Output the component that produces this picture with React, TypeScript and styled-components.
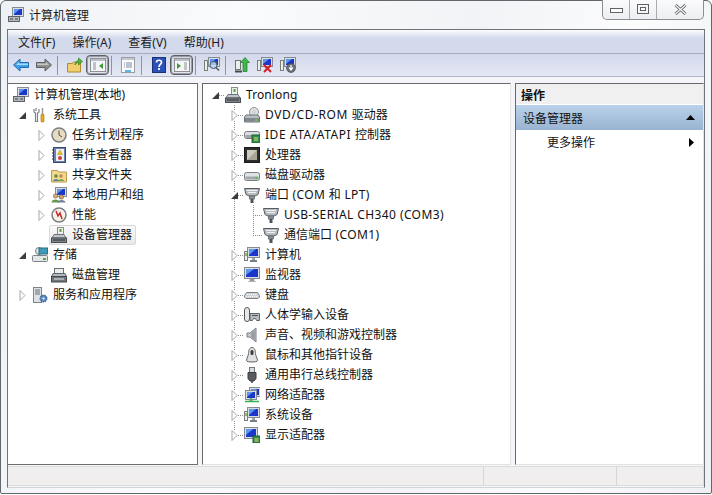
import React, { type FC, type ReactNode } from 'react'
import styled, { createGlobalStyle } from 'styled-components'

const GlobalStyle = createGlobalStyle`
	html, body {
		margin: 0;
		padding: 0;
		background: #fff;
		overflow: hidden;
	}
	* {
		box-sizing: border-box;
	}
`

const uiFont = `'Noto Sans', 'Noto Sans CJK SC', sans-serif`

const Window = styled.div`
	width: 712px;
	height: 494px;
	display: flex;
	flex-direction: column;
	border: 1px solid #62676c;
	border-radius: 6px 6px 2px 2px;
	padding: 0 6px;
	background: linear-gradient(100deg, #eef1f5 0%, #fafbfc 30%, #f1f3f6 60%, #fcfcfd 80%, #eef0f4 100%);
	font: 12px/20px ${uiFont};
	color: #111;
`

const TitleBar = styled.div`
	height: 28px;
	flex: none;
	display: flex;
	align-items: flex-start;
	gap: 5px;
	padding-top: 6px;
	padding-left: 1px;
`

const TitleText = styled.span`
	flex: 1;
	padding-top: 1px;
	line-height: 16px;
	color: #1a1a1a;
`

const Controls = styled.div`
	display: flex;
	height: 20px;
	margin-top: -7px;
	margin-right: 1px;
	border: 1px solid #8b8e92;
	border-top: none;
	border-radius: 0 0 5px 5px;
	background: linear-gradient(#fbfbfc, #eceef1);
`

const ControlButton = styled.div<{ $width: number; $last?: boolean }>`
	width: ${({ $width }) => $width}px;
	display: flex;
	align-items: center;
	justify-content: center;
	border-right: ${({ $last }) => ($last ? 'none' : '1px solid #a9acb0')};
`

const Frame = styled.div`
	height: 459px;
	flex: none;
	display: flex;
	flex-direction: column;
	border: 1px solid #6f7479;
	border-bottom-color: #d3d5d9;
	background: #f4f5f8;
`

const MenuBar = styled.div`
	height: 24px;
	flex: none;
	display: flex;
	align-items: center;
	gap: 17px;
	padding: 2px 0 0 10px;
	background: linear-gradient(#fdfdfe 0, #d3daec 35%, #d3daec 100%);
	border-bottom: 1px solid #a8acb8;
`

const MenuItem = styled.span`
	line-height: 20px;
	color: #1c1c1c;
`

const ToolBar = styled.div`
	height: 23px;
	flex: none;
	display: flex;
	align-items: center;
	padding-left: 1px;
	background: linear-gradient(#d2d9ec, #e5e8f4);
	border-bottom: 1px solid #b3b7c6;
`

const ToolButton = styled.div<{ $pressed?: boolean }>`
	width: 23px;
	height: 20px;
	display: flex;
	align-items: center;
	justify-content: center;
	border-radius: 4px;
	border: 1px solid ${({ $pressed }) => ($pressed ? '#5c5f65' : 'transparent')};
	box-shadow: ${({ $pressed }) => ($pressed ? 'inset 0 0 0 1px #9a9da4' : 'none')};
	background: ${({ $pressed }) => ($pressed ? 'linear-gradient(#d5d9e4, #e6e8ef)' : 'transparent')};
`

const ToolSeparator = styled.div<{ $after?: number }>`
	width: 1px;
	height: 19px;
	flex: none;
	margin: 0 ${({ $after }) => $after ?? 5}px 0 2px;
	background: #8f94a0;
`

const Panes = styled.div`
	margin-top: 6px;
	height: 382px;
	flex: none;
	display: grid;
	grid-template-columns: 190px 309px 189px;
	column-gap: 4px;
`

const TreePane = styled.div<{ $inset: number; $edge?: boolean }>`
	background: #fff;
	border-top: 1px solid #696969;
	border-right: 1px solid ${({ $edge }) => ($edge ? '#6f6f6f' : '#e3e3e3')};
	border-bottom: 1px solid ${({ $edge }) => ($edge ? '#6f6f6f' : '#e3e3e3')};
	border-left: ${({ $edge }) => ($edge ? 'none' : '1px solid #696969')};
	padding: 1px 0 0 ${({ $inset }) => $inset}px;
`

const Row = styled.div`
	height: 20px;
	display: flex;
	align-items: stretch;
	white-space: nowrap;
`

const dots = '#8c8c8c 0 1px, transparent 1px 2px'

const Indent = styled.span<{ $line?: boolean }>`
	width: 19px;
	flex: none;
	background: ${({ $line }) =>
		$line ? `repeating-linear-gradient(${dots}) 9px 0 / 1px 100% no-repeat` : 'none'};
`

const Expander = styled.span<{ $up?: boolean; $down?: boolean; $right?: boolean }>`
	width: 19px;
	flex: none;
	display: flex;
	align-items: center;
	justify-content: center;
	background-repeat: no-repeat;
	background-image: ${({ $up, $down, $right }) =>
		[
			$right && `repeating-linear-gradient(90deg, ${dots})`,
			$up && `repeating-linear-gradient(${dots})`,
			$down && `repeating-linear-gradient(${dots})`,
		]
			.filter(Boolean)
			.join(', ') || 'none'};
	background-size: ${({ $up, $down, $right }) =>
		[$right && '10px 1px', $up && '1px 10px', $down && '1px 10px'].filter(Boolean).join(', ') || 'auto'};
	background-position: ${({ $up, $down, $right }) =>
		[$right && '9px 10px', $up && '9px 0', $down && '9px 10px'].filter(Boolean).join(', ') || '0 0'};
`

const Twist = styled.svg`
	display: block;
	background: #fff;
`

const Label = styled.span<{ $selected?: boolean }>`
	display: flex;
	align-items: center;
	gap: 5px;
	margin-left: -2px;
	padding: 0 3px 0 1px;
	border: 1px solid ${({ $selected }) => ($selected ? '#d9d9d9' : 'transparent')};
	border-radius: 2px;
	background: ${({ $selected }) => ($selected ? 'linear-gradient(#fafafa, #e9e9e9)' : 'transparent')};
`

// caps in the original font run wider than Noto Sans, so latin runs get a little tracking
const Latin = styled.span<{ $spacing: number }>`
	letter-spacing: ${({ $spacing }) => $spacing}px;
`

const ActionPane = styled.div`
	background: #fff;
	border-top: 1px solid #696969;
	border-left: 1px solid #696969;
	border-right: 1px solid #e3e3e3;
	border-bottom: 1px solid #e3e3e3;
	display: flex;
	flex-direction: column;
`

const ActionHeader = styled.div`
	height: 21px;
	flex: none;
	padding-left: 5px;
	background: #f0f0f0;
	border-bottom: 1px solid #fff;
	font-weight: 700;
	line-height: 24px;
`

const ActionGroup = styled.div`
	height: 25px;
	flex: none;
	display: flex;
	align-items: center;
	justify-content: space-between;
	padding: 0 8px 0 7px;
	background: linear-gradient(#b9d1ea, #99b4d1);
`

const ActionText = styled.span`
	padding-top: 2px;
`

const ActionItem = styled.div`
	height: 24px;
	flex: none;
	display: flex;
	align-items: center;
	justify-content: space-between;
	padding: 0 9px 0 31px;
`

const StatusBar = styled.div`
	margin-top: 1px;
	height: 20px;
	flex: none;
	display: grid;
	grid-template-columns: 476px 133px 1fr;
	background: #f0eeee;
	border: 1px solid #dcdcdc;
	border-left: none;
`

const StatusCell = styled.div<{ $last?: boolean }>`
	border-right: ${({ $last }) => ($last ? 'none' : '1px solid #d6d6d6')};
`

const GlyphSvg = styled.svg`
	flex: none;
	display: block;
`

const Glyph: FC<{ children: ReactNode }> = ({ children }) => (
	<GlyphSvg width={16} height={16} viewBox='0 0 16 16'>
		{children}
	</GlyphSvg>
)

const Screen: FC<{ x?: number; y?: number }> = ({ x = 4, y = 1 }) => (
	<g transform={`translate(${x} ${y})`}>
		<rect x='.5' y='.5' width='11' height='9' fill='#d9dce0' stroke='#878c92' />
		<rect x='2' y='2' width='8' height='6' fill='#1b36c8' />
		<path d='M2 2h6L2 7z' fill='#5c97ee' />
		<path d='M4 10h4v1.500H4z' fill='#9ba0a6' />
	</g>
)

const MgmtIcon = () => (
	<Glyph>
		<Screen x={4} y={0} />
		<rect x='.5' y='9.500' width='11' height='5' fill='#b4b9be' stroke='#5d6369' />
		<path d='M2 12h3M7 12h3' stroke='#3f464c' />
	</Glyph>
)
const ToolsIcon = () => (
	<Glyph>
		<path d='M4 1v3M2 2v3l1.500 1v8.500h2V6L7 5V2' fill='none' stroke='#7d8288' strokeWidth='1.200' />
		<rect x='9' y='7' width='3' height='8' rx='1' fill='#e9ae18' stroke='#9a6d08' strokeWidth='.6' />
		<rect x='9.800' y='1' width='1.400' height='6' fill='#8f9499' />
	</Glyph>
)
const ClockIcon = () => (
	<Glyph>
		<circle cx='8' cy='8' r='7' fill='#e7dcc0' stroke='#7c7f84' strokeWidth='1.500' />
		<path d='M8 3.500V8l3 2' fill='none' stroke='#4c4c4c' />
	</Glyph>
)
const LogIcon = () => (
	<Glyph>
		<rect x='2.500' y='.5' width='12' height='15' fill='#6d82ae' stroke='#39466a' />
		<rect x='5' y='2' width='8' height='12' fill='#eef0f6' />
		<path d='M9 3l2.500 4.500h-5z' fill='#f0c419' stroke='#9b7a08' strokeWidth='.4' />
		<circle cx='9' cy='11' r='2' fill='#c93e3e' />
		<path d='M1 3h2M1 6h2M1 9h2M1 12h2' stroke='#2e3a58' />
	</Glyph>
)
const SharedIcon = () => (
	<Glyph>
		<path d='M.5 3.500h6l1 1.500h8v10H.5z' fill='#f2d98c' stroke='#b79a4c' />
		<circle cx='5' cy='9' r='1.800' fill='#5c8f3e' />
		<path d='M2 14c0-2.500 6-2.500 6 0z' fill='#4d7ba8' />
		<circle cx='10' cy='9' r='1.800' fill='#c08a52' />
		<path d='M7.500 14c0-2.500 5.500-2.500 5.500 0z' fill='#64a34b' />
	</Glyph>
)
const UsersIcon = () => (
	<Glyph>
		<Screen x={4} y={0} />
		<circle cx='4.500' cy='9' r='2.200' fill='#d8a872' stroke='#6c5a3d' strokeWidth='.5' />
		<path d='M.5 15.500c0-4 8-4 8 0z' fill='#5f9b4a' />
		<circle cx='10.500' cy='10' r='2.200' fill='#cf9d66' stroke='#6c5a3d' strokeWidth='.5' />
		<path d='M6.500 15.500c0-3.500 8-3.500 8 0z' fill='#6f7f95' />
	</Glyph>
)
const PerfIcon = () => (
	<Glyph>
		<circle cx='8' cy='8' r='7' fill='#f4f1e8' stroke='#7c7f84' strokeWidth='1.500' />
		<path d='M5 4l2 5 2-3 2 6' fill='none' stroke='#c9282d' strokeWidth='1.500' />
	</Glyph>
)
const DeviceIcon = () => (
	<Glyph>
		<rect x='6.500' y='.5' width='6' height='7' fill='#eef0ee' stroke='#8a8f8a' />
		<rect x='8.500' y='2' width='2' height='3' fill='#5aa23f' />
		<path d='M3 7.500h10l2 3.500H1z' fill='#c2c6ca' stroke='#6d7278' />
		<rect x='.5' y='11' width='15' height='4.500' fill='#7e858b' stroke='#4a4f55' />
		<path d='M2 13h12' stroke='#2e3338' />
	</Glyph>
)
const StoreIcon = () => (
	<Glyph>
		<circle cx='7' cy='4' r='3.500' fill='#dfe3e6' stroke='#7c8288' />
		<rect x='7' y='1' width='8.500' height='6' fill='#3d9bb8' stroke='#2b6f86' />
		<rect x='.5' y='8.500' width='15' height='6' rx='1' fill='#e4e7e9' stroke='#7c8288' />
		<rect x='11' y='11' width='3' height='2' fill='#58a63c' />
	</Glyph>
)
const DiskMgmtIcon = () => (
	<Glyph>
		<rect x='3.500' y='1.500' width='9' height='5' fill='#eceded' stroke='#6a6f74' />
		<path d='M2 6.500h12l1.500 3h-15z' fill='#b4b8bc' stroke='#5f6469' />
		<rect x='.5' y='9.500' width='15' height='5.500' fill='#70767c' stroke='#43484d' />
		<path d='M3 12h10' stroke='#e5e7e9' />
	</Glyph>
)
const ServicesIcon = () => (
	<Glyph>
		<rect x='1.500' y='.5' width='8' height='15' fill='#dfe2e5' stroke='#80858b' />
		<path d='M3 3h5M3 5h5M3 7h5' stroke='#6a7077' />
		<circle cx='11.500' cy='11.500' r='3.200' fill='#5f8fc6' stroke='#3a6596' strokeDasharray='1.500 .7' strokeWidth='1.500' />
		<circle cx='11.500' cy='11.500' r='1' fill='#fff' />
	</Glyph>
)
const DvdIcon = () => (
	<Glyph>
		<circle cx='10' cy='5' r='4.500' fill='#dfe2e4' stroke='#8c9196' />
		<circle cx='10' cy='5' r='1.200' fill='#fff' stroke='#8c9196' strokeWidth='.5' />
		<path d='M2 8h12l1.500 2v5H.5v-5z' fill='#b9bdc1' stroke='#6d7277' />
		<rect x='1' y='11' width='14' height='3.500' fill='#7f868c' />
		<rect x='11' y='12' width='3' height='2' fill='#72bf44' />
	</Glyph>
)
const IdeIcon = () => (
	<Glyph>
		<rect x='.5' y='4.500' width='15' height='7' rx='2' fill='#dadddf' stroke='#777c81' />
		<rect x='1.500' y='8' width='13' height='3' fill='#9fa4a9' />
		<rect x='8' y='8' width='8' height='8' fill='#2f8f4f' stroke='#1c5f33' />
		<path d='M10 11h4M10 13h4' stroke='#e9d664' />
	</Glyph>
)
const CpuIcon = () => (
	<Glyph>
		<rect x='.5' y='.5' width='15' height='15' fill='#2d2d2d' stroke='#1a1a1a' />
		<rect x='3' y='3' width='10' height='10' fill='#a9a596' />
		<path d='M3 3h10L3 13z' fill='#cdc9bc' />
	</Glyph>
)
const DiskIcon = () => (
	<Glyph>
		<rect x='.5' y='5.500' width='15' height='8' rx='2' fill='#dfe2e4' stroke='#7a7f84' />
		<rect x='1.500' y='9.500' width='13' height='3' fill='#a2a7ac' />
		<rect x='11.500' y='10' width='2' height='2' fill='#5bb33a' />
	</Glyph>
)
const PortIcon = () => (
	<Glyph>
		<path d='M.5 1.500h15l-1.500 6-3 1.500H5L2 7.500z' fill='#b7bcc1' stroke='#565c62' />
		<path d='M3 3.500h10M4 5.500h8' stroke='#eef0f1' />
		<rect x='5.500' y='9' width='5' height='3' fill='#8b9197' stroke='#565c62' strokeWidth='.7' />
		<rect x='6.500' y='12' width='3' height='4' fill='#4e5359' />
	</Glyph>
)
const ComputerIcon = () => (
	<Glyph>
		<rect x='3.500' y='.5' width='12' height='10' fill='#d9dce0' stroke='#878c92' />
		<rect x='5' y='2' width='9' height='7' fill='#1b36c8' />
		<path d='M5 2h7L5 8z' fill='#5c97ee' />
		<rect x='.5' y='4.500' width='3' height='9' fill='#eceeec' stroke='#7a7f7a' />
		<rect x='1.300' y='6' width='1.400' height='3' fill='#62aa3c' />
		<path d='M8 11h3v2H8z' fill='#9ba0a6' />
		<path d='M6 14h7' stroke='#7a7f84' strokeWidth='2' />
	</Glyph>
)
const MonitorIcon = () => (
	<Glyph>
		<rect x='.5' y='.5' width='15' height='11' fill='#dcdfe3' stroke='#85898f' />
		<rect x='2' y='2' width='12' height='8' fill='#1b36c8' />
		<path d='M2 2h8L2 8z' fill='#5c97ee' />
		<path d='M6 12h4v2H6zM4 14.500h8' fill='#9ba0a6' stroke='#8b9096' strokeWidth='.6' />
	</Glyph>
)
const KeyboardIcon = () => (
	<Glyph>
		<path d='M2.500 5.500h11l2 3v1.500l-1.500 1.500H2L.5 10V8.500z' fill='#cfd3d7' stroke='#7c8186' />
		<path d='M3 7.500h10M2 9.500h12' stroke='#fafafa' strokeDasharray='1 1' />
	</Glyph>
)
const HidIcon = () => (
	<Glyph>
		<rect x='.5' y='.5' width='5' height='14' rx='2.500' fill='#e5e7e9' stroke='#55595e' />
		<path d='M6 6.500h9.500v7h-3l-1-2h-2l-1 2H6z' fill='#b6bbc0' stroke='#5f6469' />
		<path d='M8 8.500h6' stroke='#555' />
	</Glyph>
)
const SpeakerIcon = () => (
	<Glyph>
		<path d='M3 6h3l6-5v14l-6-5H3z' fill='#c8cbce' stroke='#7a7e83' />
		<path d='M7 6l4-3v10l-4-3z' fill='#9b9fa3' />
	</Glyph>
)
const MouseIcon = () => (
	<Glyph>
		<path d='M8 .5c2.500 0 3.500 3 3.500 6 0 2 2 5 2 7 0 2-11 2-11 0 0-2 2-5 2-7 0-3 1-6 3.500-6z' fill='#dfe1e3' stroke='#5e6368' />
		<rect x='6.500' y='3' width='3' height='5' rx='1.500' fill='#3a3d40' />
	</Glyph>
)
const UsbIcon = () => (
	<Glyph>
		<rect x='5.500' y='.5' width='5' height='5' fill='#d7dade' stroke='#75797e' />
		<path d='M4 5.500h8v6l-2 2.500H6l-2-2.500z' fill='#585c60' stroke='#3c3f42' />
		<rect x='7.300' y='14' width='1.500' height='2' fill='#3c3f42' />
	</Glyph>
)
const NetworkIcon = () => (
	<Glyph>
		<Screen x={5} y={0} />
		<Screen x={1} y={3} />
		<path d='M7 13v-2M1 14.500h14' stroke='#2fb34a' strokeWidth='1.600' />
	</Glyph>
)
const DisplayIcon = () => (
	<Glyph>
		<rect x='.5' y='.5' width='13' height='11' fill='#dcdfe3' stroke='#85898f' />
		<rect x='2' y='2' width='10' height='8' fill='#1b36c8' />
		<path d='M2 2h7L2 8z' fill='#5c97ee' />
		<rect x='9' y='9' width='7' height='7' fill='#2f8f4f' stroke='#1c5f33' />
		<path d='M10.500 12h4M10.500 14h4' stroke='#e9d664' />
	</Glyph>
)

const BackIcon = () => (
	<Glyph>
		<path d='M.5 8L7 2v3.500h8.500v5H7V14z' fill='#3f9fe8' stroke='#1f6cb4' />
		<path d='M3 8l3-3v1.500h9v1.500z' fill='#a7dcfa' />
	</Glyph>
)
const ForwardIcon = () => (
	<Glyph>
		<path d='M15.500 8L9 2v3.500H.5v5H9V14z' fill='#8f8f8f' stroke='#5e5e5e' />
		<path d='M13 8l-3-3v1.500H1V8z' fill='#c8c8c8' />
	</Glyph>
)
const UpFolderIcon = () => (
	<Glyph>
		<path d='M.5 6.500h5l1-1.500h7v10H.5z' fill='#f2cf6e' stroke='#b08d2e' />
		<path d='M8 8c0-3 2-4.500 3.500-4.500V1l4 3.500-4 3.500V5.500C10 5.500 9 6.500 8 8z' fill='#55b53a' stroke='#2f7e1d' strokeWidth='.7' />
	</Glyph>
)
const PaneLeftIcon = () => (
	<Glyph>
		<rect x='.5' y='1.500' width='15' height='13' fill='#f5f6f8' stroke='#8c9095' />
		<rect x='1' y='2' width='14' height='2' fill='#b9bdc5' />
		<path d='M3 6h3M3 8h3M3 10h3M3 12h3' stroke='#8c9095' />
		<path d='M13 6v6l-4-3z' fill='#3d9a34' />
	</Glyph>
)
const PaneRightIcon = () => (
	<Glyph>
		<rect x='.5' y='1.500' width='15' height='13' fill='#f5f6f8' stroke='#8c9095' />
		<rect x='1' y='2' width='14' height='2' fill='#b9bdc5' />
		<path d='M10 6h3M10 8h3M10 10h3M10 12h3' stroke='#8c9095' />
		<path d='M3 6v6l4-3z' fill='#3d9a34' />
	</Glyph>
)
const PropsIcon = () => (
	<Glyph>
		<rect x='1.500' y='.5' width='13' height='15' fill='#fbfbfb' stroke='#9a9ea3' />
		<rect x='2' y='1' width='12' height='2' fill='#c5c9cf' />
		<path d='M4 6h1M4 8h1M4 10h1M6 6h6M6 8h6M6 10h6' stroke='#7c8aa5' />
		<rect x='5' y='13' width='6' height='2' fill='#58b6e8' />
	</Glyph>
)
const HelpIcon = () => (
	<Glyph>
		<rect x='1.500' y='.5' width='13' height='15' fill='#2b50b8' stroke='#1b3278' />
		<path d='M5.500 5.500c0-3 5-3 5 0 0 2-2.500 2-2.500 4.500' fill='none' stroke='#fff' strokeWidth='1.700' />
		<rect x='7.100' y='11' width='1.800' height='2' fill='#fff' />
	</Glyph>
)
const ScanIcon = () => (
	<Glyph>
		<Screen x={4} y={0} />
		<rect x='.5' y='3.500' width='3' height='10' fill='#eceeec' stroke='#7a7f7a' />
		<circle cx='9.500' cy='8' r='3.500' fill='#bfe0f5' fillOpacity='.8' stroke='#4f5a66' />
		<path d='M12 10.500l3 3' stroke='#4f5a66' strokeWidth='1.600' />
	</Glyph>
)
const UpdateIcon = () => (
	<Glyph>
		<rect x='1.500' y='3.500' width='5' height='9' fill='#eceeec' stroke='#6f746f' />
		<path d='M1 14.500h7' stroke='#44494e' strokeWidth='2' />
		<path d='M11 .5l4.500 5H13v9H9v-9H6.500z' fill='#3fb64a' stroke='#207a2a' strokeWidth='.7' />
	</Glyph>
)
const RemoveIcon = () => (
	<Glyph>
		<Screen x={4} y={0} />
		<rect x='.5' y='3.500' width='3' height='10' fill='#eceeec' stroke='#7a7f7a' />
		<path d='M7 8l7 7M14 8l-7 7' stroke='#d3222a' strokeWidth='2' />
	</Glyph>
)
const DisableIcon = () => (
	<Glyph>
		<Screen x={4} y={0} />
		<rect x='.5' y='3.500' width='3' height='10' fill='#eceeec' stroke='#7a7f7a' />
		<circle cx='11' cy='11' r='4.500' fill='#6a7077' stroke='#3f444a' strokeWidth='.6' />
		<path d='M11 8v4M9 10.500l2 2.500 2-2.500' fill='none' stroke='#fff' strokeWidth='1.200' />
	</Glyph>
)

type TwistState = 'open' | 'closed' | 'none'

type TreeNode = {
	label: ReactNode
	icon: ReactNode
	level: number
	state: TwistState
	selected?: boolean
}

const TwistIcon: FC<{ state: TwistState }> = ({ state }) => {
	if (state === 'open') {
		return (
			<Twist width='7' height='7' viewBox='0 0 7 7'>
				<path d='M7 0v7H0z' fill='#3c3c3c' />
			</Twist>
		)
	}
	if (state === 'closed') {
		return (
			<Twist width='7' height='11' viewBox='0 0 7 11'>
				<path d='M1 .5l5 5-5 5z' fill='#fff' stroke='#a6a6a6' />
			</Twist>
		)
	}
	return null
}

const leftTree: TreeNode[] = [
	{ label: '系统工具', icon: <ToolsIcon />, level: 0, state: 'open' },
	{ label: '任务计划程序', icon: <ClockIcon />, level: 1, state: 'closed' },
	{ label: '事件查看器', icon: <LogIcon />, level: 1, state: 'closed' },
	{ label: '共享文件夹', icon: <SharedIcon />, level: 1, state: 'closed' },
	{ label: '本地用户和组', icon: <UsersIcon />, level: 1, state: 'closed' },
	{ label: '性能', icon: <PerfIcon />, level: 1, state: 'closed' },
	{ label: '设备管理器', icon: <DeviceIcon />, level: 1, state: 'none', selected: true },
	{ label: '存储', icon: <StoreIcon />, level: 0, state: 'open' },
	{ label: '磁盘管理', icon: <DiskMgmtIcon />, level: 1, state: 'none' },
	{ label: '服务和应用程序', icon: <ServicesIcon />, level: 0, state: 'closed' },
]

const deviceTree: TreeNode[] = [
	{ label: <><Latin $spacing={0.6}>DVD/CD-ROM </Latin>驱动器</>, icon: <DvdIcon />, level: 1, state: 'closed' },
	{ label: <><Latin $spacing={0.55}>IDE ATA/ATAPI </Latin>控制器</>, icon: <IdeIcon />, level: 1, state: 'closed' },
	{ label: '处理器', icon: <CpuIcon />, level: 1, state: 'closed' },
	{ label: '磁盘驱动器', icon: <DiskIcon />, level: 1, state: 'closed' },
	{ label: <>端口<Latin $spacing={0.4}> (COM </Latin>和<Latin $spacing={0.4}> LPT)</Latin></>, icon: <PortIcon />, level: 1, state: 'open' },
	{ label: <Latin $spacing={0.4}>USB-SERIAL CH340 (COM3)</Latin>, icon: <PortIcon />, level: 2, state: 'none' },
	{ label: <>通信端口<Latin $spacing={0.4}> (COM1)</Latin></>, icon: <PortIcon />, level: 2, state: 'none' },
	{ label: '计算机', icon: <ComputerIcon />, level: 1, state: 'closed' },
	{ label: '监视器', icon: <MonitorIcon />, level: 1, state: 'closed' },
	{ label: '键盘', icon: <KeyboardIcon />, level: 1, state: 'closed' },
	{ label: '人体学输入设备', icon: <HidIcon />, level: 1, state: 'closed' },
	{ label: '声音、视频和游戏控制器', icon: <SpeakerIcon />, level: 1, state: 'closed' },
	{ label: '鼠标和其他指针设备', icon: <MouseIcon />, level: 1, state: 'closed' },
	{ label: '通用串行总线控制器', icon: <UsbIcon />, level: 1, state: 'closed' },
	{ label: '网络适配器', icon: <NetworkIcon />, level: 1, state: 'closed' },
	{ label: '系统设备', icon: <ComputerIcon />, level: 1, state: 'closed' },
	{ label: '显示适配器', icon: <DisplayIcon />, level: 1, state: 'closed' },
]

const menus = ['文件(F)', '操作(A)', '查看(V)', '帮助(H)']

const DeviceRows = () => (
	<>
		<Row>
			<Expander $right>
				<TwistIcon state='open' />
			</Expander>
			<Label>
				<DeviceIcon />
				<Latin $spacing={0.1}>Tronlong</Latin>
			</Label>
		</Row>
		{deviceTree.map((node, i) => {
			const last = i === deviceTree.length - 1
			if (node.level === 2) {
				const lastChild = deviceTree[i + 1].level !== 2
				return (
					<Row key={i}>
						<Indent />
						<Indent $line />
						<Expander $up $right $down={!lastChild} />
						<Label>
							{node.icon}
							<span>{node.label}</span>
						</Label>
					</Row>
				)
			}
			return (
				<Row key={i}>
					<Indent />
					<Expander $up $right $down={!last}>
						<TwistIcon state={node.state} />
					</Expander>
					<Label>
						{node.icon}
						<span>{node.label}</span>
					</Label>
				</Row>
			)
		})}
	</>
)

export default function App() {
	return (
		<Window>
			<GlobalStyle />
			<TitleBar>
				<MgmtIcon />
				<TitleText>计算机管理</TitleText>
				<Controls>
					<ControlButton $width={27}>
						<svg width='13' height='6' viewBox='0 0 13 6'>
							<rect x='.5' y='1.500' width='12' height='4' fill='#fff' stroke='#5f6368' />
						</svg>
					</ControlButton>
					<ControlButton $width={27}>
						<svg width='13' height='11' viewBox='0 0 13 11'>
							<rect x='.5' y='.5' width='11' height='9' fill='#f6f6f6' stroke='#5f6368' />
							<rect x='3.500' y='3.500' width='5' height='3' fill='#fff' stroke='#5f6368' />
						</svg>
					</ControlButton>
					<ControlButton $width={46} $last>
						<svg width='13' height='11' viewBox='0 0 13 11'>
							<path d='M1.500 1l10 9M11.500 1l-10 9' stroke='#5f6368' strokeWidth='3' />
							<path d='M1.500 1l10 9M11.500 1l-10 9' stroke='#f2f2f2' strokeWidth='1.300' />
						</svg>
					</ControlButton>
				</Controls>
			</TitleBar>
			<Frame>
				<MenuBar>
					{menus.map((menu) => (
						<MenuItem key={menu}>{menu}</MenuItem>
					))}
				</MenuBar>
				<ToolBar>
					<ToolButton><BackIcon /></ToolButton>
					<ToolButton><ForwardIcon /></ToolButton>
					<ToolSeparator />
					<ToolButton><UpFolderIcon /></ToolButton>
					<ToolButton $pressed><PaneLeftIcon /></ToolButton>
					<ToolSeparator $after={4} />
					<ToolButton><PropsIcon /></ToolButton>
					<ToolSeparator />
					<ToolButton><HelpIcon /></ToolButton>
					<ToolButton $pressed><PaneRightIcon /></ToolButton>
					<ToolSeparator $after={4} />
					<ToolButton><ScanIcon /></ToolButton>
					<ToolSeparator $after={4} />
					<ToolButton><UpdateIcon /></ToolButton>
					<ToolButton><RemoveIcon /></ToolButton>
					<ToolButton><DisableIcon /></ToolButton>
				</ToolBar>
				<Panes>
					<TreePane $inset={5} $edge>
						<Row>
							<Label>
								<MgmtIcon />
								计算机管理(本地)
							</Label>
						</Row>
						{leftTree.map((node, i) => (
							<Row key={i}>
								{node.level === 1 && <Indent />}
								<Expander>
									<TwistIcon state={node.state} />
								</Expander>
								<Label $selected={node.selected}>
									{node.icon}
									{node.label}
								</Label>
							</Row>
						))}
					</TreePane>
					<TreePane $inset={3}>
						<DeviceRows />
					</TreePane>
					<ActionPane>
						<ActionHeader>操作</ActionHeader>
						<ActionGroup>
							<ActionText>设备管理器</ActionText>
							<svg width='9' height='5' viewBox='0 0 9 5'>
								<path d='M4.500 0L9 5H0z' fill='#000' />
							</svg>
						</ActionGroup>
						<ActionItem>
							<ActionText>更多操作</ActionText>
							<svg width='5' height='9' viewBox='0 0 5 9'>
								<path d='M0 0l5 4.500L0 9z' fill='#000' />
							</svg>
						</ActionItem>
					</ActionPane>
				</Panes>
				<StatusBar>
					<StatusCell />
					<StatusCell />
					<StatusCell $last />
				</StatusBar>
			</Frame>
		</Window>
	)
}
